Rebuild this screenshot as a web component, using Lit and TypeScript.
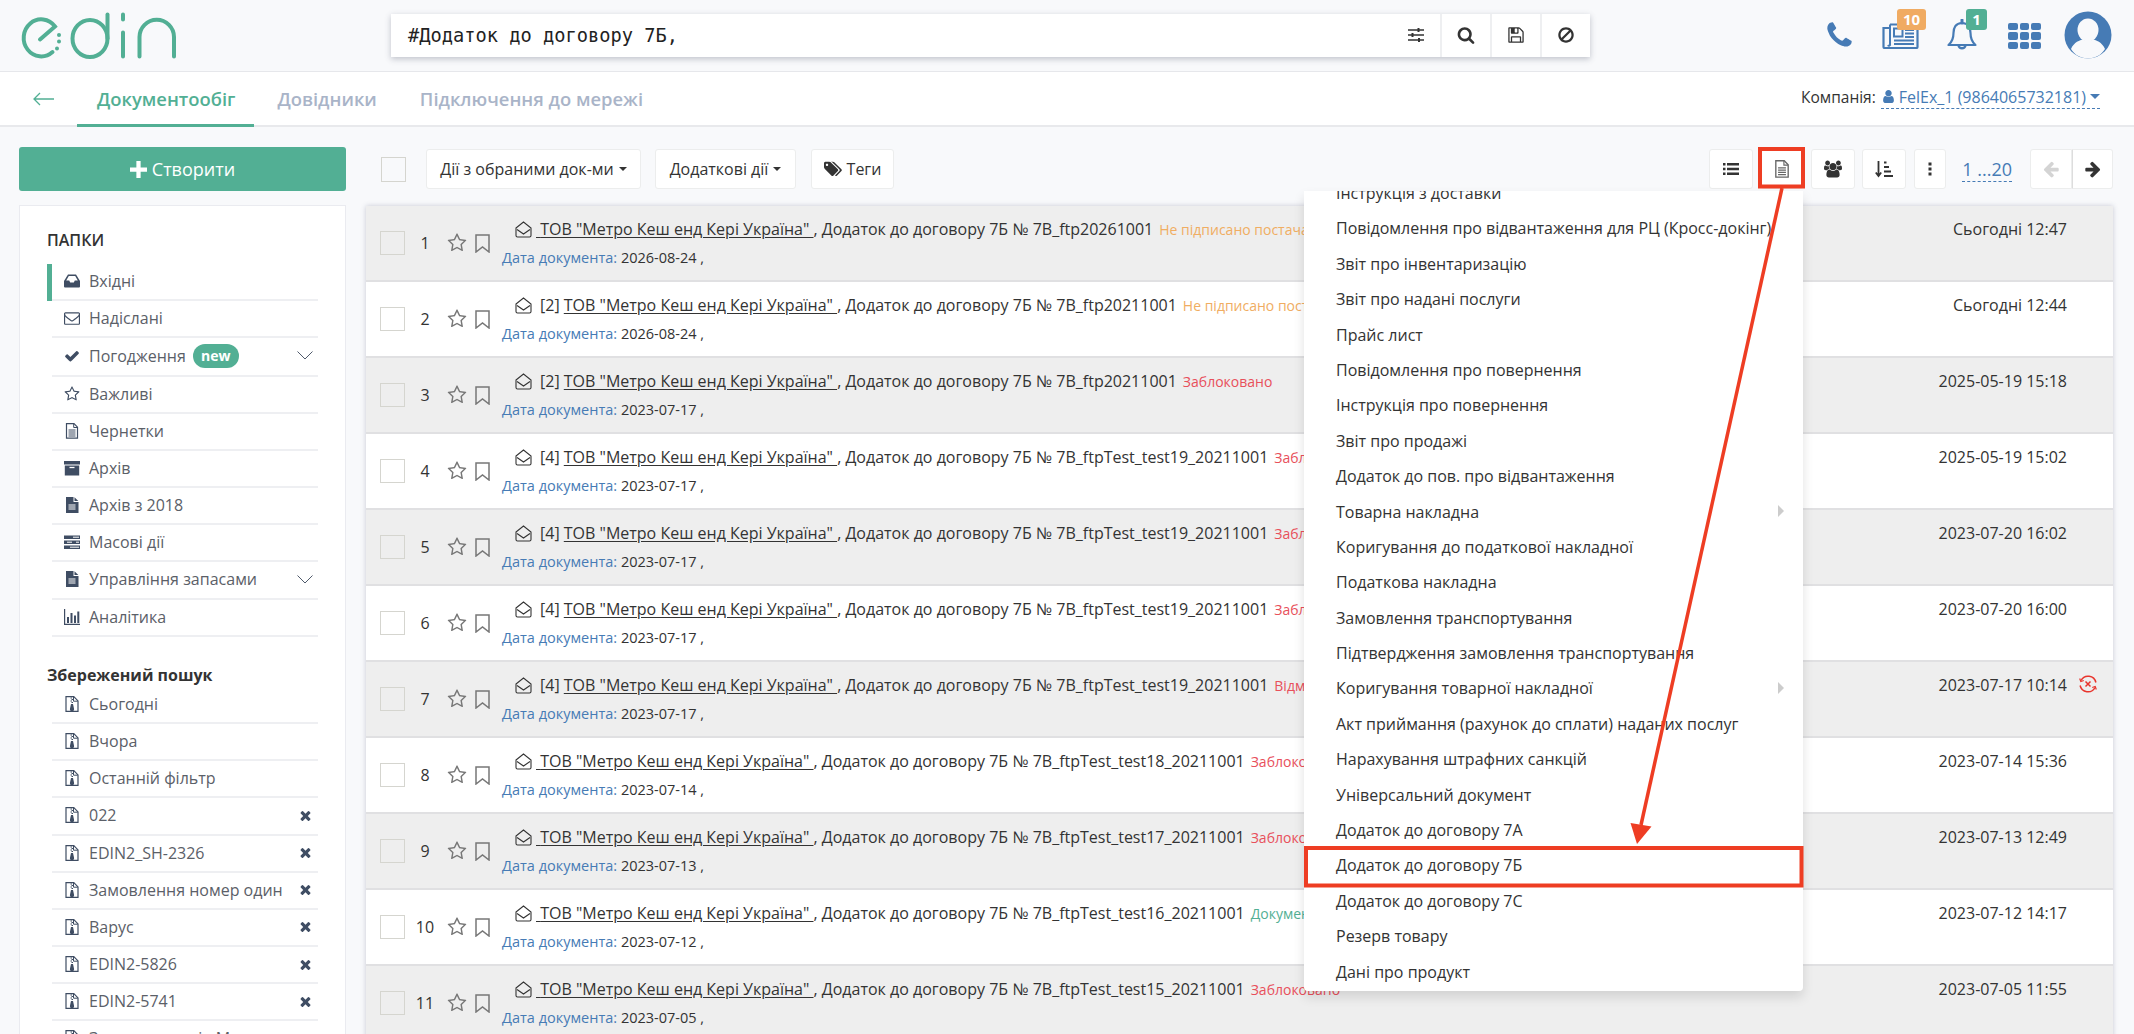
import { LitElement, html, css, svg } from "lit";
import { customElement } from "lit/decorators.js";

const FA = {
  phone: "M1600 1240q0 27-10 70.5t-21 68.5q-21 50-122 106-94 51-186 51-27 0-53-3.5t-57.5-12.5-47-14.5-55.5-20.5-49-18q-98-35-175-83-127-79-264-216t-216-264q-48-77-83-175-3-9-18-49t-20.5-55.5-14.5-47-12.5-57.5-3.5-53q0-92 51-186 56-101 106-122 25-11 68.5-21t70.5-10q14 0 21 3 18 6 53 76 11 19 30 54t35 63.5 31 53.5q3 4 17.5 25t21.5 35.5 7 28.5q0 20-28.5 50t-62 55-62 53-28.5 46q0 9 5 22.5t8.5 20.5 14 24 11.5 19q76 137 174 235t235 174q2 1 19 11.5t24 14 20.5 8.5 22.5 5q18 0 46-28.5t53-62 55-62 50-28.5q14 0 28.5 7t35.5 21.5 25 17.5q25 15 53.5 31t63.5 35 54 30q70 35 76 53 3 7 3 21z",
  star: "M1201 1004l306-297-422-62-189-382-189 382-422 62 306 297-73 421 378-199 377 199zm527-357q0 22-26 48l-363 354 86 500q1 7 1 20 0 50-41 50-19 0-40-12l-449-236-449 236q-22 12-40 12-21 0-31.5-14.5t-10.5-35.5q0-6 2-20l86-500-364-354q-25-27-25-48 0-37 56-46l502-73 225-455q19-41 49-41t49 41l225 455 502 73q56 9 56 46z",
  check: "M1671 566q0 40-28 68l-724 724-136 136q-28 28-68 28t-68-28l-136-136-362-362q-28-28-28-68t28-68l136-136q28-28 68-28t68 28l294 295 656-657q28-28 68-28t68 28l136 136q28 28 28 68z",
  times: "M1490 1322q0 40-28 68l-136 136q-28 28-68 28t-68-28l-294-294-294 294q-28 28-68 28t-68-28l-136-136q-28-28-28-68t28-68l294-294-294-294q-28-28-28-68t28-68l136-136q28-28 68-28t68 28l294 294 294-294q28-28 68-28t68 28l136 136q28 28 28 68t-28 68l-294 294 294 294q28 28 28 68z",
  search: "M1216 832q0-185-131.500-316.500t-316.500-131.500-316.500 131.500-131.500 316.500 131.500 316.500 316.500 131.500 316.500-131.500 131.500-316.500zm512 832q0 52-38 90t-90 38q-54 0-90-38l-343-342q-179 124-399 124-143 0-273.500-55.500t-225-150-150-225-55.500-273.500 55.500-273.500 150-225 225-150 273.500-55.500 273.500 55.500 225 150 150 225 55.500 273.500q0 220-124 399l343 343q37 37 37 90z",
  ban: "M1440 893q0-161-87-295l-754 753q137 89 297 89 111 0 211.500-43.500t173.500-116.500 116-174.500 43-212.500zm-999 299l755-754q-135-91-300-91-148 0-273 73t-198 199-73 274q0 162 89 299zm1223-299q0 157-61 300t-163.500 246-245 164-298.500 61-298.500-61-245-164-163.500-246-61-300 61-299.500 163.500-245.500 245-164 298.500-61 298.500 61 245 164 163.500 245.500 61 299.500z",
  floppy: "M512 1536h768v-384h-768v384zm896 0h128v-896q0-14-10-38.500t-20-34.500l-281-281q-10-10-34-20t-39-10v416q0 40-28 68t-68 28h-576q-40 0-68-28t-28-68v-416h-128v1280h128v-416q0-40 28-68t68-28h832q40 0 68 28t28 68v416zm-384-928v-320q0-13-9.500-22.500t-22.500-9.500h-192q-13 0-22.500 9.500t-9.500 22.500v320q0 13 9.500 22.500t22.500 9.500h192q13 0 22.500-9.500t9.500-22.500zm640 32v928q0 40-28 68t-68 28h-1344q-40 0-68-28t-28-68v-1344q0-40 28-68t68-28h928q40 0 88 20t76 48l280 280q28 28 48 76t20 88z",
  left: "M1664 896v128q0 53-32.500 90.500t-84.500 37.500h-704l293 294q38 36 38 90t-38 90l-75 76q-37 37-90 37-52 0-91-37l-651-652q-37-37-37-90 0-52 37-91l651-650q38-38 91-38 52 0 90 38l75 74q38 38 38 91t-38 91l-293 293h704q52 0 84.500 37.500t32.500 90.500z",
  right: "M1600 960q0 54-37 91l-651 651q-39 37-91 37-51 0-90-37l-75-75q-38-38-38-91t38-91l293-293h-704q-52 0-84.500-37.500t-32.500-90.500v-128q0-53 32.500-90.500t84.500-37.500h704l-293-294q-38-36-38-90t38-90l75-75q38-38 90-38 53 0 91 38l651 651q37 35 37 90z",
  user: "M1536 1399q0 109-62.500 187t-150.500 78h-854q-88 0-150.500-78t-62.500-187q0-85 8.500-160.500t31.500-152 58.500-131 94-89 134.500-34.500q131 128 313 128t313-128q76 0 134.500 34.500t94 89 58.500 131 31.500 152 8.500 160.500zm-256-887q0 159-112.500 271.500t-271.500 112.500-271.500-112.500-112.500-271.500 112.500-271.500 271.500-112.500 271.500 112.500 112.500 271.500z",
  envelope: "M1664 1504v-768q-32 36-69 66-268 206-426 338-51 43-83 67t-86.500 48.500-102.500 24.500h-2q-48 0-102.500-24.500t-86.500-48.500-83-67q-158-132-426-338-37-30-69-66v768q0 13 9.500 22.500t22.500 9.500h1472q13 0 22.500-9.500t9.500-22.500zm0-1051v-24.500l-.5-13-3-12.500-5.500-9-9-7.500-14-2.500h-1472q-13 0-22.500 9.500t-9.500 22.500q0 168 147 284 193 152 401 317 6 5 35 29.500t46 37.500 44.500 31.500 50.500 27.500 43 9h2q20 0 43-9t50.500-27.500 44.500-31.500 46-37.500 35-29.500q208-165 401-317 54-43 100.500-115.500t46.500-131.500zm128-37v1088q0 66-47 113t-113 47h-1472q-66 0-113-47t-47-113v-1088q0-66 47-113t113-47h1472q66 0 113 47t47 113z",
};
const TAGS = "M448 448q0-53-37.500-90.500t-90.500-37.500-90.500 37.500-37.500 90.500 37.500 90.500 90.500 37.500 90.500-37.500 37.500-90.500zm1067 576q0 53-37 90l-491 492q-39 37-91 37-53 0-90-37l-715-716q-38-37-64.500-101t-26.500-117v-416q0-52 38-90t90-38h416q53 0 117 26.500t102 64.500l715 714q37 39 37 91zm384 0q0 53-37 90l-491 492q-39 37-91 37-36 0-59-14t-53-45l470-470q37-37 37-90 0-52-37-91l-715-714q-38-38-102-64.500t-117-26.500h224q53 0 117 26.500t102 64.500l715 714q37 39 37 91z";
const USERS = "M593 896q-162 5-265 128h-134q-82 0-138-40.500t-56-118.500q0-353 124-353 6 0 43.500 21t97.500 42.500 119 21.500q67 0 133-23-5 37-5 66 0 139 81 256zm1071 637q0 120-73 189.500t-194 69.500h-874q-121 0-194-69.500t-73-189.500q0-53 3.500-103.500t14-109 26.500-108.500 43-97.500 62-81 85.500-53.500 111.500-20q10 0 43 21.500t73 48 107 48 135 21.500 135-21.500 107-48 73-48 43-21.500q61 0 111.500 20t85.500 53.500 62 81 43 97.500 26.500 108.500 14 109 3.500 103.500zm-1024-1277q0 106-75 181t-181 75-181-75-75-181 75-181 181-75 181 75 75 181zm704 384q0 159-112.500 271.500t-271.500 112.500-271.500-112.500-112.500-271.500 112.500-271.500 271.500-112.500 271.500 112.500 112.500 271.500zm576 225q0 78-56 118.500t-138 40.500h-134q-103-123-265-128 81-117 81-256 0-29-5-66 66 23 133 23 59 0 119-21.500t97.500-42.500 43.500-21q124 0 124 353zm-128-609q0 106-75 181t-181 75-181-75-75-181 75-181 181-75 181 75 75 181z";

const fa = (d: string, cls = "") => html`<svg class="ic ${cls}" viewBox="0 0 1792 1792"><path fill="currentColor" d=${d}></path></svg>`;
const fa20 = (d: string, cls = "") => html`<svg class="ic ${cls}" viewBox="0 0 1920 1792"><path fill="currentColor" d=${d}></path></svg>`;
const ic16 = (body: unknown, cls = "") => html`<svg class="ic ${cls}" viewBox="0 0 16 16">${body}</svg>`;

const docOutline = svg`<path d="M2.5 .7h7.5l3.500 3.500v11h-11z" fill="none" stroke="currentColor" stroke-width="1.200"/><path d="M9.700 .9v3.600h3.600" fill="none" stroke="currentColor" stroke-width="1"/><path d="M4.500 7h7M4.500 9h7M4.500 11h7M4.500 13h7" stroke="currentColor" stroke-width="1"/>`;
const docFilled = svg`<path d="M2 0h7.500v5h5v11h-12.500z" fill="currentColor"/><path d="M10.500 .2l3.800 3.800h-3.800z" fill="currentColor"/><path d="M4.500 8h7M4.500 10h7M4.500 12h7" stroke="#fff" stroke-width="1"/>`;
const inbox = svg`<path d="M4 1.500h8l4 6.500v5.500a1 1 0 0 1-1 1h-14a1 1 0 0 1-1-1v-5.500z" fill="currentColor"/><path d="M4.800 3h6.400l2.600 4.500h-3l-1 2h-3.600l-1-2h-3z" fill="#fff"/>`;
const archive = svg`<path d="M0 1h16v3.500h-16z M.8 5.500h14.400v10h-14.400z" fill="currentColor"/><path d="M5.500 7.500h5" stroke="#fff" stroke-width="1.300"/>`;
const tasks = svg`<path d="M0 1.500h16v3.500h-16z M0 6.500h16v3.500h-16z M0 11.500h16v3.500h-16z" fill="currentColor"/><path d="M9 3.200h6M3 8.200h5M12 8.200h3M6 13.200h9" stroke="#fff" stroke-width="1"/>`;
const chart = svg`<path d="M.6 0v15.400h15.400" fill="none" stroke="currentColor" stroke-width="1.200"/><path d="M3 8h2v6h-2z M6.500 4h2v10h-2z M10 6.500h2v7.500h-2z M13.300 2.500h2v11.500h-2z" fill="currentColor"/>`;
const zipDoc = svg`<path d="M2 .7h7.800l4.200 4.200v10.400h-12z" fill="none" stroke="currentColor" stroke-width="1.200"/><path d="M9.500 .9v4.300h4.300" fill="none" stroke="currentColor" stroke-width="1"/><path d="M6.500 2h1.500M7.500 3.500h1.500M6.500 5h1.500M7.500 6.500h1.500" stroke="currentColor" stroke-width="1"/><path d="M7 8h2l1 4.500a2.100 2.100 0 1 1-4 0z" fill="currentColor"/>`;

const folders: { t: string; i: unknown; chev?: boolean; isNew?: boolean; active?: boolean; tall?: boolean }[] = [
  { t: "Вхідні", i: ic16(inbox), active: true },
  { t: "Надіслані", i: fa(FA.envelope) },
  { t: "Погодження", i: fa(FA.check), chev: true, isNew: true, tall: true },
  { t: "Важливі", i: fa(FA.star) },
  { t: "Чернетки", i: ic16(docOutline) },
  { t: "Архів", i: ic16(archive) },
  { t: "Архів з 2018", i: ic16(docFilled) },
  { t: "Масові дії", i: ic16(tasks) },
  { t: "Управління запасами", i: ic16(docFilled), chev: true, tall: true },
  { t: "Аналітика", i: ic16(chart) },
];
const saved: [string, boolean][] = [
  ["Сьогодні", false], ["Вчора", false], ["Останній фільтр", false], ["022", true], ["EDIN2_SH-2326", true],
  ["Замовлення номер один", true], ["Варус", true], ["EDIN2-5826", true], ["EDIN2-5741", true], ["Замовлення від М", true],
];
const rows: { pre: string; no: string; st: string; c: string; dd: string; d: string; err?: boolean }[] = [
  { pre: "", no: "7B_ftp20261001", st: "Не підписано постачальником", c: "o", dd: "2026-08-24", d: "Сьогодні 12:47" },
  { pre: "[2] ", no: "7B_ftp20211001", st: "Не підписано постачальником", c: "o", dd: "2026-08-24", d: "Сьогодні 12:44" },
  { pre: "[2] ", no: "7B_ftp20211001", st: "Заблоковано", c: "r", dd: "2023-07-17", d: "2025-05-19 15:18" },
  { pre: "[4] ", no: "7B_ftpTest_test19_20211001", st: "Заблоковано", c: "r", dd: "2023-07-17", d: "2025-05-19 15:02" },
  { pre: "[4] ", no: "7B_ftpTest_test19_20211001", st: "Заблоковано", c: "r", dd: "2023-07-17", d: "2023-07-20 16:02" },
  { pre: "[4] ", no: "7B_ftpTest_test19_20211001", st: "Заблоковано", c: "r", dd: "2023-07-17", d: "2023-07-20 16:00" },
  { pre: "[4] ", no: "7B_ftpTest_test19_20211001", st: "Відмовлено", c: "r", dd: "2023-07-17", d: "2023-07-17 10:14", err: true },
  { pre: "", no: "7B_ftpTest_test18_20211001", st: "Заблоковано", c: "r", dd: "2023-07-14", d: "2023-07-14 15:36" },
  { pre: "", no: "7B_ftpTest_test17_20211001", st: "Заблоковано", c: "r", dd: "2023-07-13", d: "2023-07-13 12:49" },
  { pre: "", no: "7B_ftpTest_test16_20211001", st: "Документ прийнято", c: "g", dd: "2023-07-12", d: "2023-07-12 14:17" },
  { pre: "", no: "7B_ftpTest_test15_20211001", st: "Заблоковано", c: "r", dd: "2023-07-05", d: "2023-07-05 11:55" },
];
const menu: [string, boolean?][] = [
  ["Інструкція з доставки"], ["Повідомлення про відвантаження для РЦ (Кросс-докінг)"], ["Звіт про інвентаризацію"],
  ["Звіт про надані послуги"], ["Прайс лист"], ["Повідомлення про повернення"], ["Інструкція про повернення"],
  ["Звіт про продажі"], ["Додаток до пов. про відвантаження"], ["Товарна накладна", true],
  ["Коригування до податкової накладної"], ["Податкова накладна"], ["Замовлення транспортування"],
  ["Підтвердження замовлення транспортування"], ["Коригування товарної накладної", true],
  ["Акт приймання (рахунок до сплати) наданих послуг"], ["Нарахування штрафних санкцій"], ["Універсальний документ"],
  ["Додаток до договору 7А"], ["Додаток до договору 7Б"], ["Додаток до договору 7С"], ["Резерв товару"], ["Дані про продукт"],
];

@customElement("app-root")
export class AppRoot extends LitElement {
  static styles = css`
    :host { display: block; position: relative; height: 1034px; overflow: hidden; background: #f8f9fb; font-family: "Open Sans", sans-serif; font-size: 16px; color: #333; }
    * { box-sizing: border-box; }
    .ic { display: block; width: 16px; height: 16px; flex: none; }

    header { display: flex; align-items: center; height: 72px; padding: 0 22px 0 20px; border-bottom: 1px solid #e6e7eb; }
    .logo { width: 160px; height: 60px; flex: none; margin-right: 211px; }
    .search { display: flex; align-items: stretch; width: 1199px; height: 43px; background: #fff; box-shadow: 0 2px 6px rgba(60, 65, 90, .3); margin-top: -1px; }
    .search .q { flex: 1; padding-left: 17px; font: 18.7px/43px "DejaVu Sans Mono", monospace; color: #222; white-space: nowrap; }
    .search .sb { width: 50px; display: flex; align-items: center; justify-content: center; border-left: 2px solid #eeeff1; color: #333; }
    .search .sb .ic { width: 18px; height: 18px; }
    .search .sb.f { width: 49px; border-left: 0; }
    .hicons { display: flex; align-items: center; margin-left: auto; margin-top: -1px; }
    .hi { position: relative; color: #467bb5; display: block; flex: none; }
    .phone { width: 31px; height: 31px; margin-right: 27px; margin-left: -2px; }
    .phone .ic { width: 100%; height: 100%; }
    .news { width: 37px; height: 26px; margin-right: 28px; margin-top: 2px; }
    .bell { width: 30px; height: 33px; margin-right: 31px; }
    .grid9 { width: 33px; height: 26px; margin-right: 23px; margin-top: 2px; display: grid; grid-template-columns: repeat(3, 1fr); grid-template-rows: repeat(3, 1fr); gap: 2px; }
    .grid9 i { background: #467bb5; border-radius: 2px; }
    .avatar { width: 48px; height: 48px; }
    .hi svg { display: block; }
    .badge { position: absolute; top: -14px; color: #fff; font-weight: 700; font-size: 15px; line-height: 21px; height: 21px; text-align: center; border-radius: 3px; }
    .badge.o { left: 15px; width: 29px; background: #f0ab62; }
    .badge.g { left: 19px; top: -10px; width: 21px; background: #52af94; }

    nav { display: flex; align-items: stretch; height: 55px; background: #fff; border-bottom: 2px solid #e8e9ec; padding-left: 33px; }
    .back { width: 21px; height: 14px; align-self: center; color: #52af94; margin-right: 23px; }
    .tab { padding: 0 20px; font-weight: 600; font-size: 18.400px; line-height: 54px; color: #a9b4c8; white-space: nowrap; }
    .tab.on { color: #52af94; border-bottom: 3px solid #52af94; margin-bottom: -2px; padding: 0 19px 0 20px; }
    .tab.second { margin-left: 3px; }
    .tab.third { margin-left: 3px; }
    .company { margin-left: auto; padding-right: 34px; align-self: center; display: flex; align-items: center; white-space: nowrap; gap: 5px; margin-top: -3px; }
    .company .lb { font-size: 15.500px; }
    .company a { display: inline-flex; align-items: center; gap: 3px; color: #467bb5; border-bottom: 1px dashed #467bb5; line-height: 22px; }
    .company .ic { width: 15px; height: 15px; }
    .caret { display: inline-block; width: 0; height: 0; border: 5px solid transparent; border-top-color: currentColor; border-bottom: 0; margin-left: 1px; }

    main { display: flex; align-items: flex-start; padding-left: 19px; }
    .left { width: 327px; flex: none; padding-top: 20px; }
    .create { display: flex; align-items: center; justify-content: center; gap: 5px; height: 44px; background: #52af94; color: #fff; font-size: 18px; border-radius: 3px; }
    .create .ic { width: 17px; height: 17px; }
    .panel { margin-top: 14px; background: #fff; border: 1px solid #eaebf0; padding: 22px 27px 0 27px; height: 900px; }
    .ph { font-weight: 600; font-size: 16px; line-height: 24px; color: #333; margin-bottom: 12px; }
    .ph.b { font-weight: 700; margin: 0 0 0; padding-top: 26px; line-height: 24px; }
    .item { position: relative; display: flex; align-items: center; height: 37px; margin-left: 5px; padding: 0 0 1px 12px; border-bottom: 2px solid #eeeff2; color: #5b6068; white-space: nowrap; }
    .item.tall { height: 38.500px; }
    .item.on { box-shadow: -5px 0 0 #52af94; }
    .item.s { height: 37.150px; }
    .item .iw { width: 25px; flex: none; color: #3f4d63; }
    .pill { margin-left: 7px; height: 24px; width: 46px; border-radius: 12px; background: #52af94; color: #fff; font-weight: 700; font-size: 14px; line-height: 23px; text-align: center; }
    .chev { margin-left: auto; margin-right: 5px; width: 16px; height: 9px; color: #4f5a6b; }
    .x { margin-left: auto; margin-right: 5.500px; color: #3f4d63; width: 15px; height: 15px; }

    .right { flex: 1; min-width: 0; margin-left: 20px; padding-top: 22px; padding-right: 21px; }
    .tools { display: flex; align-items: center; height: 40px; padding-left: 15px; }
    .cb { width: 25px; height: 25px; border: 1px solid #d5d5cf; flex: none; background: transparent; }
    .tb { height: 40px; display: flex; align-items: center; justify-content: center; background: #fff; border: 1px solid #eceded; border-radius: 3px; white-space: nowrap; color: #333; flex: none; }
    .tb.t1 { width: 215px; margin-left: 20px; }
    .tb.t2 { width: 141px; margin-left: 14px; }
    .tb.t3 { width: 83px; margin-left: 15px; gap: 5px; }
    .tb .caret { margin-left: 5px; border-width: 4.500px; border-bottom: 0; }
    .tb.ib { width: 44px; color: #333; }
    .tb .ic { width: 18px; height: 18px; }
    .tb.ib.m1 { margin-left: auto; }
    .tb.ib.m2 { width: 42px; margin-left: 8px; color: #666; }
    .tb.ib.m3 { margin-left: 8px; }
    .tb.ib.m4 { margin-left: 7px; }
    .tb.ib.m5 { width: 32px; margin-left: 8px; }
    .pages { margin-left: 16px; color: #467bb5; border-bottom: 1px dashed #467bb5; font-size: 18px; line-height: 24px; white-space: nowrap; }
    .pair { display: flex; margin-left: 18px; }
    .pair .tb { width: 42px; border-radius: 3px 0 0 3px; }
    .pair .tb + .tb { border-left: 1px solid #ddd; width: 41px; border-radius: 0 3px 3px 0; }
    .pair .dis { color: #d4d4d4; }

    .list { margin-top: 17px; box-shadow: 0 0 5px rgba(60, 65, 100, .25); }
    .row { display: flex; height: 76px; align-items: flex-start; border-bottom: 2px solid #e0e0e2; background: #fff; padding-left: 14px; }
    .row.alt { background: #eeeeee; }
    .row .cb { margin-top: 25px; height: 24px; }
    .num { width: 40px; flex: none; text-align: center; margin-top: 25px; line-height: 24px; }
    .sv { width: 20px; height: 20px; margin-top: 27px; color: #777; flex: none; margin-left: 2px; }
    .bm { width: 15px; height: 19px; margin-top: 28px; margin-left: 8px; color: #777; flex: none; }
    .cnt { flex: 1; min-width: 0; margin-left: 12px; padding-top: 11px; white-space: nowrap; }
    .l1 { display: flex; align-items: center; height: 24px; padding-left: 13px; }
    .l1 .env { width: 17px; height: 17px; margin-right: 4px; color: #333; }
    .l1 u { text-underline-offset: 2px; white-space: pre; }
    .l1 .pre { white-space: pre; }
    .l1 .pre.pf { margin-left: 4px; }
    .st { font-size: 14px; margin-left: 6px; }
    .st.o { color: #f0ad62; } .st.r { color: #e8505b; } .st.g { color: #52af94; }
    .l2 { margin-top: 5px; line-height: 24px; font-size: 14.500px; }
    .l2 span { color: #467bb5; }
    .dt { position: relative; flex: none; width: 180px; padding-right: 46px; padding-top: 11px; line-height: 24px; text-align: right; white-space: nowrap; }
    .err { position: absolute; right: 16px; top: 13px; width: 18px; height: 18px; }

    .menu { position: absolute; left: 1304px; top: 191px; width: 499px; height: 800px; background: #fff; overflow: hidden; box-shadow: 0 6px 12px rgba(0, 0, 0, .12); border-radius: 0 0 4px 4px; }
    .mi { display: flex; align-items: center; height: 35.400px; padding-left: 32px; white-space: nowrap; color: #333; position: relative; }
    .mi:first-child { margin-top: -15.700px; }
    .mi .sub { position: absolute; left: 474px; top: 11px; width: 0; height: 0; border-left: 6px solid #ccc; border-top: 6px solid transparent; border-bottom: 6px solid transparent; }
    .anno { position: absolute; left: 0; top: 0; width: 2134px; height: 1034px; pointer-events: none; }
  `;

  render() {
    return html`
      <header>
        <svg class="logo" viewBox="20 5.500 160 60" fill="none" stroke="#52af94" stroke-width="4" stroke-linecap="round">
          <path d="M40 39 L55 26 A17.500 18.500 0 1 0 52.500 51.500"/>
          <circle cx="59" cy="34.500" r="2" fill="#52af94" stroke="none"/>
          <circle cx="59" cy="41" r="2" fill="#52af94" stroke="none"/>
          <circle cx="57" cy="48" r="2" fill="#52af94" stroke="none"/>
          <ellipse cx="90" cy="38" rx="17.500" ry="18.500"/>
          <path d="M107.500 38V14"/>
          <path d="M123 14V19M123 32V56"/>
          <path d="M139.500 56V36.500A17.200 17.200 0 0 1 174 36.500V56"/>
        </svg>
        <div class="search">
          <div class="q">#Додаток до договору 7Б,</div>
          <div class="sb f">
            <svg class="ic" viewBox="0 0 18 18"><path d="M1 4h16M1 9h16M1 14h16" stroke="currentColor" stroke-width="1.300"/><path d="M10.500 2h2v4h-2zM4.500 7h2v4h-2zM11 12h2v4h-2z" fill="currentColor"/></svg>
          </div>
          <div class="sb">${fa(FA.search)}</div>
          <div class="sb">${fa(FA.floppy)}</div>
          <div class="sb">${fa(FA.ban)}</div>
        </div>
        <div class="hicons">
          <div class="hi phone">${fa(FA.phone)}</div>
          <div class="hi news">
            <svg width="37" height="26" viewBox="0 0 37 26" fill="none" stroke="#467bb5">
              <path d="M8 1.500h27.500v22.500a1 1 0 0 1-1 1h-32a1 1 0 0 1-1-1V5h6.500" stroke-width="2.200"/>
              <path d="M8 1.500V21a1 1 0 0 1-2 1" stroke-width="2"/>
              <path d="M12 5.500h8.500v8h-8.500z" stroke-width="2"/>
              <path d="M23 7h9M23 10.500h9M23 14h9M12 17.500h20M12 21h20" stroke-width="2"/>
            </svg>
            <span class="badge o">10</span>
          </div>
          <div class="hi bell">
            <svg width="30" height="33" viewBox="0 0 30 33" fill="none" stroke="#467bb5" stroke-width="2.200" stroke-linejoin="round">
              <path d="M15 4C8.500 4 6.500 9 6.500 14c0 6-2 9.500-5 12h27c-3-2.500-5-6-5-12 0-5-2-10-8.500-10z"/>
              <path d="M11.500 26.500a3.600 3.600 0 0 0 7 0" stroke-width="2.400"/>
              <path d="M15 1v3" stroke-width="3" stroke-linecap="round"/>
            </svg>
            <span class="badge g">1</span>
          </div>
          <div class="hi grid9">${Array.from({ length: 9 }, () => html`<i></i>`)}</div>
          <div class="hi avatar">
            <svg width="48" height="48" viewBox="0 0 48 48">
              <circle cx="24" cy="24" r="23.500" fill="#467bb5"/>
              <ellipse cx="24" cy="19" rx="10.500" ry="11.500" fill="#f8f9fb"/>
              <path d="M7 38c3-7 9-9 12-9.500c3 2 7 2 10 0c3 .5 9 2.500 12 9.500a20 20 0 0 1-34 0z" fill="#f8f9fb"/>
            </svg>
          </div>
        </div>
      </header>
      <nav>
        <svg class="back" viewBox="0 0 21 14" fill="none" stroke="currentColor" stroke-width="1.300"><path d="M21 7H1M7 1L1 7l6 6"/></svg>
        <div class="tab on">Документообіг</div>
        <div class="tab second">Довідники</div>
        <div class="tab third">Підключення до мережі</div>
        <div class="company"><span class="lb">Компанія:</span>
          <a>${fa(FA.user)}FelEx_1 (9864065732181)<i class="caret"></i></a>
        </div>
      </nav>
      <main>
        <div class="left">
          <div class="create">
            <svg class="ic" viewBox="0 0 16 16"><path d="M6 0h4v6h6v4h-6v6h-4v-6h-6v-4h6z" fill="currentColor"/></svg>
            Створити
          </div>
          <div class="panel">
            <div class="ph">ПАПКИ</div>
            ${folders.map((f) => html`<div class="item ${f.active ? "on" : ""} ${f.tall ? "tall" : ""}">
              <span class="iw">${f.i}</span>${f.t}
              ${f.isNew ? html`<span class="pill">new</span>` : ""}
              ${f.chev ? html`<svg class="chev" viewBox="0 0 16 9" fill="none" stroke="currentColor" stroke-width="1"><path d="M.5 .5L8 8 15.500 .5"/></svg>` : ""}
            </div>`)}
            <div class="ph b">Збережений пошук</div>
            ${saved.map(([t, x]) => html`<div class="item s"><span class="iw">${ic16(zipDoc)}</span>${t}${x ? fa(FA.times, "x") : ""}</div>`)}
          </div>
        </div>
        <div class="right">
          <div class="tools">
            <div class="cb"></div>
            <div class="tb t1">Дії з обраними док-ми<i class="caret"></i></div>
            <div class="tb t2">Додаткові дії<i class="caret"></i></div>
            <div class="tb t3">${fa20(TAGS)}Теги</div>
            <div class="tb ib m1">
              <svg class="ic" viewBox="0 0 18 18"><path d="M1 3h2.500v2.500h-2.500zM1 7.700h2.500v2.500h-2.500zM1 12.500h2.500v2.500h-2.500zM5 3h12v2.500h-12zM5 7.700h12v2.500h-12zM5 12.500h12v2.500h-12z" fill="currentColor"/></svg>
            </div>
            <div class="tb ib m2">${ic16(docOutline)}</div>
            <div class="tb ib m3">${fa20(USERS)}</div>
            <div class="tb ib m4">
              <svg class="ic" viewBox="0 0 18 18"><path d="M3.500 1v14M.8 12.500l2.700 3.500 2.700-3.500" fill="none" stroke="currentColor" stroke-width="1.800"/><path d="M9 1.500h2.500v2h-2.500zM9 6h5v2h-5zM9 10.500h7v2h-7zM9 15h9v2h-9z" fill="currentColor"/></svg>
            </div>
            <div class="tb ib m5">
              <svg class="ic" viewBox="0 0 18 18"><path d="M7.500 2.500h3v3h-3zM7.500 7.500h3v3h-3zM7.500 12.500h3v3h-3z" fill="currentColor"/></svg>
            </div>
            <div class="pages">1 ...20</div>
            <div class="pair">
              <div class="tb dis">${fa(FA.left)}</div>
              <div class="tb">${fa(FA.right)}</div>
            </div>
          </div>
          <div class="list">
            ${rows.map((r, i) => html`<div class="row ${i % 2 === 0 ? "alt" : ""}">
              <div class="cb"></div>
              <div class="num">${i + 1}</div>
              ${fa(FA.star, "sv")}
              <svg class="bm" viewBox="0 0 15 19" fill="none" stroke="currentColor" stroke-width="1.500"><path d="M1 1h13v17l-6.500-5-6.500 5z"/></svg>
              <div class="cnt">
                <div class="l1">
                  <svg class="ic env" viewBox="0 0 17 17" fill="none" stroke="currentColor" stroke-width="1.100"><path d="M1 7L8.500 1 16 7v7.500a1.500 1.500 0 0 1-1.500 1.500h-12a1.500 1.500 0 0 1-1.500-1.500z"/><path d="M2 8.500l6.500 4.500 6.500-4.500"/></svg>
                  ${r.pre ? html`<span class="pre pf">${r.pre}</span>` : ""}<u>${r.pre ? "" : " "}ТОВ "Метро Кеш енд Кері Україна" </u><span class="pre">, Додаток до договору 7Б № ${r.no}</span>
                  <span class="st ${r.c}">${r.st}</span>
                </div>
                <div class="l2"><span>Дата документа:</span> ${r.dd} ,</div>
              </div>
              <div class="dt">${r.d}
                ${r.err ? html`<svg class="err" viewBox="0 0 18 18" fill="none" stroke="#e8342c" stroke-width="1.500"><path d="M2 5.500A8 8 0 0 1 16.900 7.500M16 12.500A8 8 0 0 1 1.100 10.500"/><path d="M.7 3.500l1.100 3 3-1M17.300 14.500l-1.100-3-3 1" stroke-width="1.200"/><path d="M6.500 6.500l5 5M11.500 6.500l-5 5" stroke-width="1.500"/></svg>` : ""}
              </div>
            </div>`)}
          </div>
        </div>
      </main>
      <div class="menu">
        ${menu.map(([t, sub]) => html`<div class="mi">${t}${sub ? html`<i class="sub"></i>` : ""}</div>`)}
      </div>
      <svg class="anno" viewBox="0 0 2134 1034" fill="none" stroke="#ee3d23">
        <rect x="1760" y="149" width="43" height="37.500" stroke-width="4"/>
        <rect x="1306" y="848" width="495.500" height="37.500" stroke-width="4"/>
        <path d="M1782 188L1641 825" stroke-width="3.500"/>
        <path d="M1630.500 823L1651.500 826.500L1637 844z" fill="#ee3d23" stroke="none"/>
      </svg>
    `;
  }
}
